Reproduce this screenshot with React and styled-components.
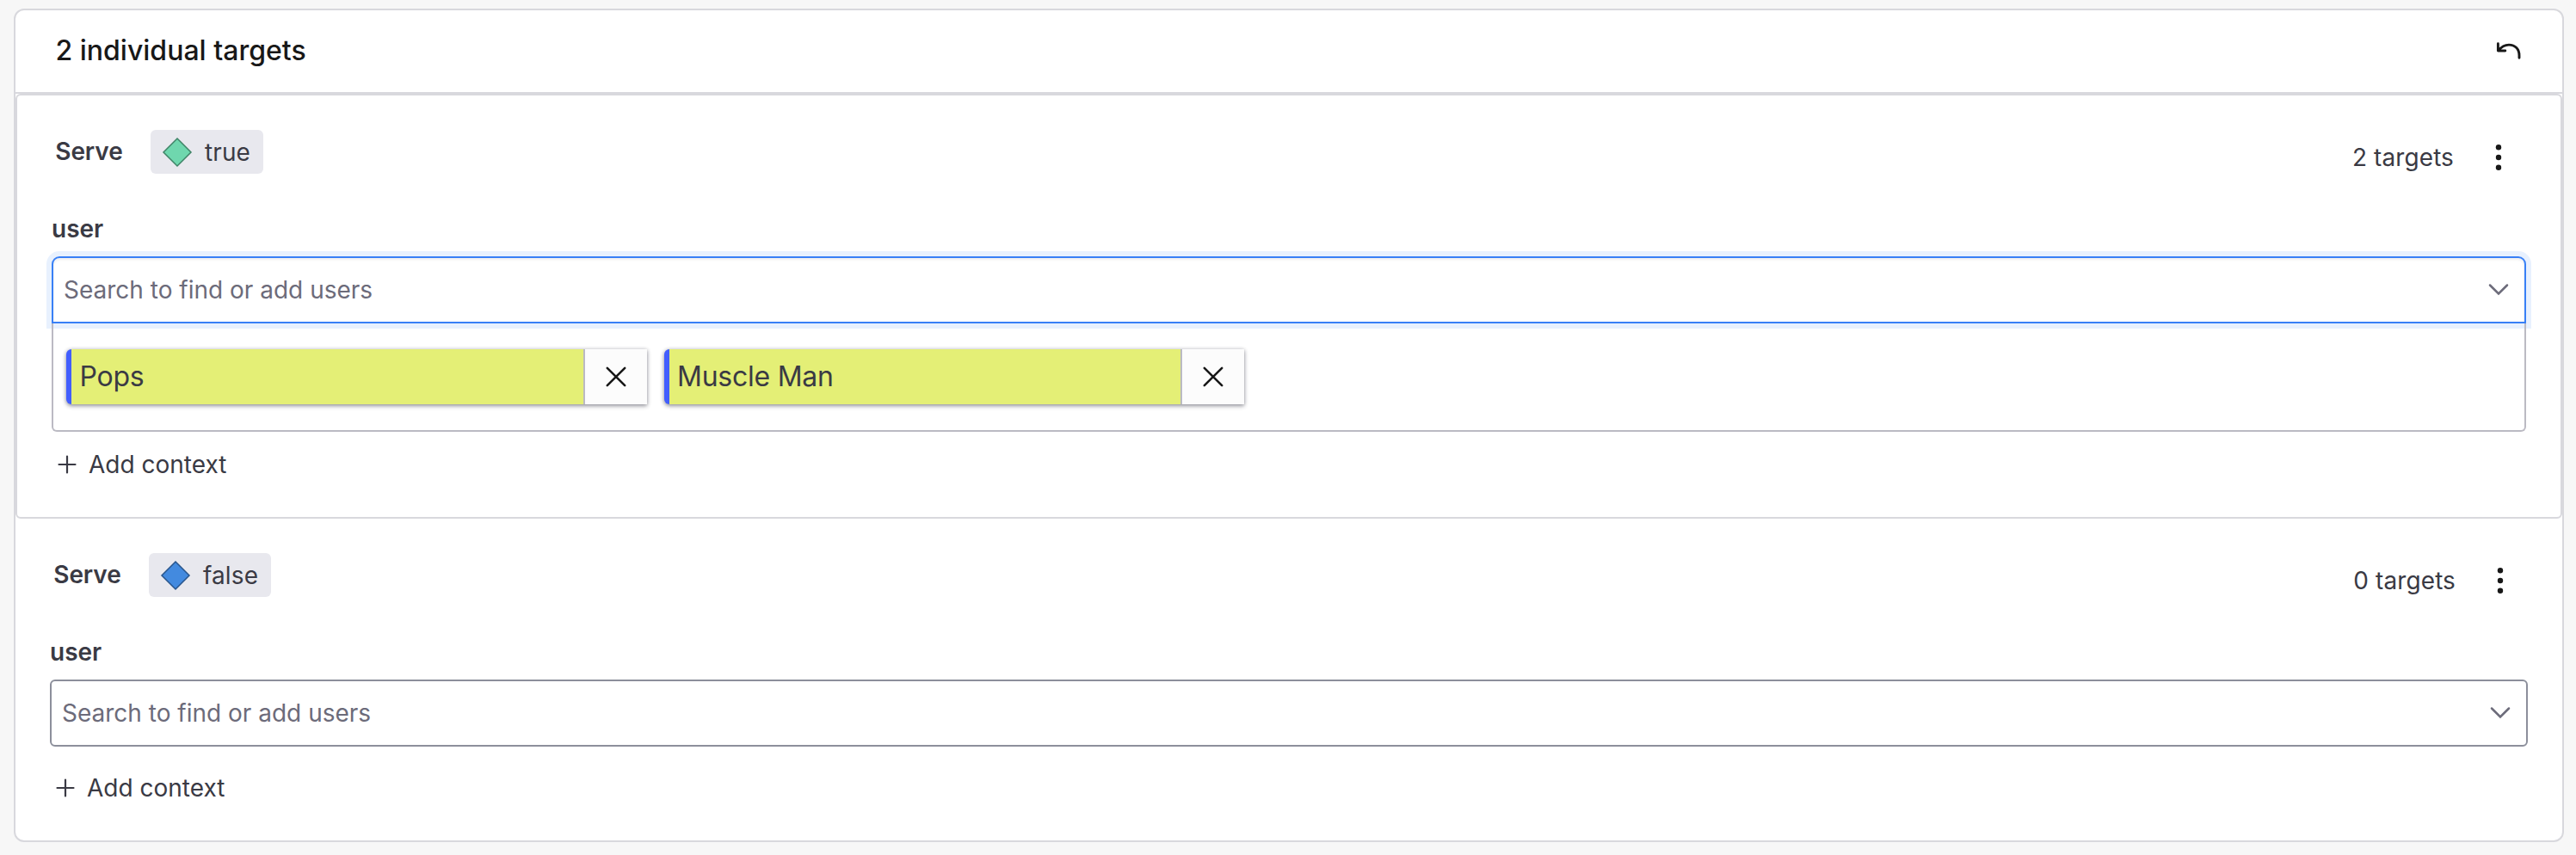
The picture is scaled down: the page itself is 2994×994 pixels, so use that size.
import React from "react";
import styled, { createGlobalStyle } from "styled-components";

const GlobalStyle = createGlobalStyle`
  * { box-sizing: border-box; }
  body {
    margin: 0;
    background: #f7f7f7;
    color: #3a3a44;
    font-family: Inter, "Liberation Sans", sans-serif;
    font-size: 28px;
    line-height: 40px;
  }
  button { all: unset; box-sizing: border-box; display: flex; align-items: center; justify-content: center; }
`;

const Page = styled.main`
  height: 994px;
  padding: 10px 14px 15px 16px;
`;

const Card = styled.section`
  height: 969px;
  background: #fff;
  border: 2px solid #d8d8dd;
  border-radius: 12px;
`;

const CardHeader = styled.header`
  display: flex;
  align-items: center;
  justify-content: space-between;
  height: 97px;
  padding: 0 40px 2px 46.5px;
  border-bottom: 2px solid #d8d8dd;
`;

const Title = styled.h2`
  margin: 0;
  font-size: 32px;
  font-weight: 500;
  color: #181818;
`;

const IconButton = styled.button`
  width: ${(p) => p.$width}px;
  height: ${(p) => p.$height}px;
`;

const Variation = styled.section`
  padding: 40px 40px 41px;
  border: ${(p) => (p.$outlined ? "2px solid #d8d8dd" : "0")};
  border-radius: 6px;
`;

const VariationHeader = styled.div`
  display: flex;
  justify-content: space-between;
  height: 64px;
  padding-left: 4.3px;
`;

const Serve = styled.div`
  display: flex;
  align-items: center;
  height: 51px;
`;

const ServeLabel = styled.span`
  width: 110.7px;
  padding-bottom: 2px;
  font-weight: 600;
  letter-spacing: -0.1px;
`;

const Pill = styled.span`
  display: flex;
  align-items: center;
  gap: 14px;
  height: 51px;
  padding: 0 15px 0 13px;
  border-radius: 6px;
  background: #e8e8ee;
  letter-spacing: 0.12px;
`;

const Summary = styled.div`
  display: flex;
  align-items: center;
  gap: 20px;
  letter-spacing: 0.1px;
`;

const FieldLabel = styled.label`
  display: block;
  margin: 31px 0 12px;
  font-weight: 600;
`;

const Select = styled.div`
  display: flex;
  align-items: center;
  justify-content: space-between;
  height: 78px;
  padding: 0 18px 0 12px;
  color: #6c6b7a;
  border: 2px solid ${(p) => (p.$focused ? "#3880f6" : "#8c8f9b")};
  border-radius: ${(p) => (p.$focused ? "9px 9px 0 0" : "6px")};
  box-shadow: ${(p) => (p.$focused ? "0 0 0 6px #e8f1fe, inset 0 2px 3px rgba(40, 44, 52, 0.08)" : "none")};
`;

const ChipPanel = styled.div`
  display: flex;
  gap: 20px;
  height: 126px;
  padding: 30px 15px;
  border: 2px solid #bbbac3;
  border-top: 0;
  border-radius: 0 0 6px 6px;
`;

const Chip = styled.div`
  display: flex;
  width: 674.5px;
  height: 64px;
  border-left: 6px solid #425eff;
  border-radius: 6px 0 0 6px;
  background: #e4ef76;
  box-shadow: 0 2px 5px rgba(40, 40, 55, 0.45), 0 0 4px rgba(40, 40, 55, 0.18);
`;

const ChipName = styled.span`
  flex: 1;
  padding-left: 9.5px;
  font-size: 32px;
  line-height: 63px;
  letter-spacing: -0.25px;
`;

const ChipRemove = styled.button`
  && {
    width: 74px;
    height: 64px;
    border-left: 2px solid #bbbac3;
    background: #fcfcfc;
  }
`;

const AddContext = styled.button`
  && {
    justify-content: flex-start;
    gap: 14px;
    height: 40px;
    margin-top: ${(p) => p.$gap}px;
    padding-left: 7px;
  }
`;

const UndoIcon = () => (
  <svg width="32" height="32" viewBox="0 0 32 32" fill="none" stroke="#181818" strokeWidth="2.900" strokeLinecap="round" strokeLinejoin="round">
    <path d="M3.400 7.700V16H11.800M3.800 15.800C7.400 11.200 11.400 9.100 16 9.100C23.400 9.100 28 14.200 28 21.500V24.200" />
  </svg>
);

const MoreIcon = () => (
  <svg width="8" height="32" viewBox="0 0 8 32" fill="#181818">
    <circle cx="4" cy="4.300" r="3.200" />
    <circle cx="4" cy="16" r="3.200" />
    <circle cx="4" cy="27.700" r="3.200" />
  </svg>
);

const ChevronIcon = () => (
  <svg width="24" height="16" viewBox="0 0 24 16" fill="none" stroke="#6c6b7a" strokeWidth="2.500" strokeLinecap="round">
    <path d="M2 2.500L12 12.500L22 2.500" />
  </svg>
);

const CloseIcon = () => (
  <svg width="28" height="28" viewBox="0 0 28 28" fill="none" stroke="#181818" strokeWidth="2.600" strokeLinecap="round">
    <path d="M3.800 3.800L24.200 24.200M24.200 3.800L3.800 24.200" />
  </svg>
);

const PlusIcon = () => (
  <svg width="22" height="22" viewBox="0 0 22 22" fill="none" stroke="#3a3a44" strokeWidth="2.200" strokeLinecap="round">
    <path d="M11 1.500V20.500M1.500 11H20.500" />
  </svg>
);

const Diamond = ({ fill, stroke }) => (
  <svg width="36" height="36" viewBox="0 0 36 36" fill={fill} stroke={stroke} strokeWidth="1.500">
    <path d="M18 2L34 18L18 34L2 18Z" />
  </svg>
);

function TargetGroup({ value, fill, stroke, users = [] }) {
  const active = users.length > 0;
  return (
    <Variation $outlined={active}>
      <VariationHeader>
        <Serve>
          <ServeLabel>Serve</ServeLabel>
          <Pill>
            <Diamond fill={fill} stroke={stroke} />
            {value}
          </Pill>
        </Serve>
        <Summary>
          <span>{users.length} targets</span>
          <IconButton $width={64} $height={64} aria-label="More options">
            <MoreIcon />
          </IconButton>
        </Summary>
      </VariationHeader>
      <FieldLabel>user</FieldLabel>
      <Select $focused={active}>
        <span>Search to find or add users</span>
        <ChevronIcon />
      </Select>
      {active && (
        <ChipPanel>
          {users.map((name) => (
            <Chip key={name}>
              <ChipName>{name}</ChipName>
              <ChipRemove aria-label={`Remove ${name}`}>
                <CloseIcon />
              </ChipRemove>
            </Chip>
          ))}
        </ChipPanel>
      )}
      <AddContext $gap={active ? 18 : 28}>
        <PlusIcon />
        Add context
      </AddContext>
    </Variation>
  );
}

export default function App() {
  return (
    <Page>
      <GlobalStyle />
      <Card>
        <CardHeader>
          <Title>2 individual targets</Title>
          <IconButton $width={44} $height={40} aria-label="Undo">
            <UndoIcon />
          </IconButton>
        </CardHeader>
        <TargetGroup value="true" fill="#6fd7ae" stroke="#3f8467" users={["Pops", "Muscle Man"]} />
        <TargetGroup value="false" fill="#438adf" stroke="#28558c" />
      </Card>
    </Page>
  );
}
